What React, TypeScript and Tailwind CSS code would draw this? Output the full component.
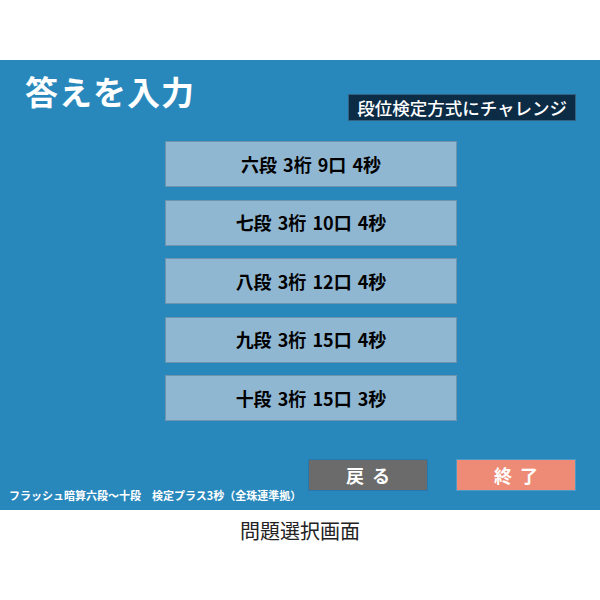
import React from "react";

const options = [
  "六段 3桁 9口 4秒",
  "七段 3桁 10口 4秒",
  "八段 3桁 12口 4秒",
  "九段 3桁 15口 4秒",
  "十段 3桁 15口 3秒",
];

const jp = { fontFamily: '"Noto Sans CJK JP", "Noto Sans", sans-serif' };

export default function App() {
  return (
    <div className="w-[600px] h-[600px] bg-white flex flex-col" style={jp}>
      <div className="h-[60px]" />
      <div className="h-[450px] bg-[#2888bc] flex flex-col">
        <div className="flex justify-between items-start pl-[25px] pr-[24px] pt-[11px]">
          <h1 className="text-[33px] leading-[40px] font-bold tracking-[1px] text-white">
            答えを入力
          </h1>
          <div className="mt-[23px] h-[27px] px-[8px] bg-[#0c2c46] border border-[#33617f] text-white text-[17.5px] leading-[25px] font-medium">
            段位検定方式にチャレンジ
          </div>
        </div>

        <div className="ml-[165px] mt-[20px] w-[292px] flex flex-col gap-[12.5px]">
          {options.map((label) => (
            <button
              key={label}
              className="h-[46px] bg-[#90b7d1] border border-[#6f94ad] text-[18px] font-bold text-black [word-spacing:2px]"
            >
              {label}
            </button>
          ))}
        </div>

        <div className="flex-1 flex items-end justify-between pl-[9px] pr-[24px]">
          <p className="mb-[8px] text-[11px] leading-[14px] font-bold text-white whitespace-pre">
            フラッシュ暗算六段～十段　検定プラス3秒（全珠連準拠）
          </p>
          <div className="flex gap-[28px] mb-[19px]">
            <button className="w-[120px] h-[32px] bg-[#6b6b6b] border border-[#2479b0] text-white text-[18px] font-bold tracking-[8px] pl-[8px]">
              戻る
            </button>
            <button className="w-[120px] h-[32px] bg-[#ee8b76] border border-[#4d9ac7] text-white text-[18px] font-bold tracking-[8px] pl-[8px]">
              終了
            </button>
          </div>
        </div>
      </div>
      <div className="text-center text-[20px] leading-[28px] text-[#222] mt-[7px]">
        問題選択画面
      </div>
    </div>
  );
}
